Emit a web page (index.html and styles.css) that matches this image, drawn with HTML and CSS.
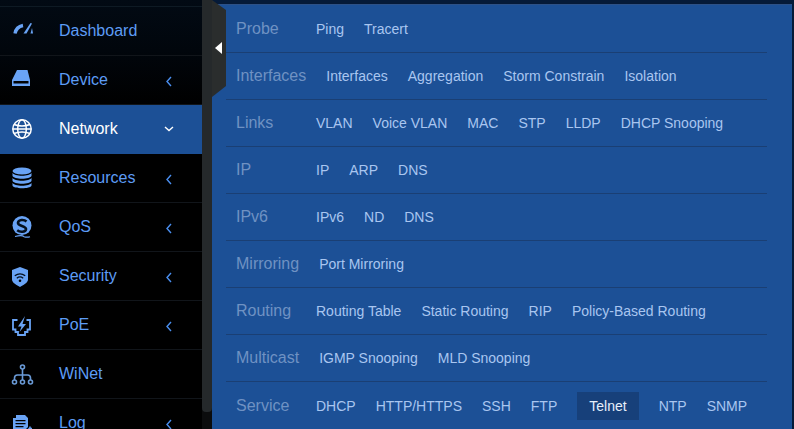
FILE: index.html
```html
<!DOCTYPE html>
<html lang="en">
<head>
<meta charset="utf-8">
<title>Network</title>
<link rel="stylesheet" href="styles.css">
</head>
<body>
<div class="app">
  <nav class="sidebar">
    <ul class="nav">
      <li class="nav-item">
        <svg class="nav-icon" viewBox="0 0 24 24"><path class="stroke" stroke-width="3.400" d="M5 14.500A10 10 0 0 1 13 6.500"/><path class="fill" d="M13.500 14.500L20.500 4l1.500.5-5.500 10z"/><path class="fill" d="M22 9l1 5.500h-2.500z"/></svg>
        <span class="nav-label">Dashboard</span>
      </li>
      <li class="nav-item">
        <svg class="nav-icon" viewBox="0 0 24 24"><path class="fill" fill-rule="evenodd" d="M7 2h10.500l2.500 10v6H2v-6zM3.500 13v2.500h15V13z"/></svg>
        <span class="nav-label">Device</span>
        <svg class="chev" viewBox="0 0 8 12"><path d="M6 2L2 6.500 6 11"/></svg>
      </li>
      <li class="nav-item active">
        <svg class="nav-icon" viewBox="0 0 24 24"><g class="white-line"><circle cx="12" cy="12" r="9.200"/><ellipse cx="12" cy="12" rx="4.300" ry="9.200"/><path d="M4 7.500q8 3 16 0M4 16.500q8-3 16 0M2.800 12h18.400"/></g></svg>
        <span class="nav-label">Network</span>
        <svg class="chev chev-down" viewBox="0 0 10 6"><path d="M1 1l4 3.500L9 1"/></svg>
      </li>
      <li class="nav-item">
        <svg class="nav-icon" viewBox="0 0 24 24"><ellipse class="fill" cx="12" cy="5" rx="9.500" ry="3.500"/><path class="fill" d="M2.500 6.800c1.500 4 17.500 4 19 0v3c-1 4-18 4-19 0zM2.500 11.800c1.500 4 17.500 4 19 0v3c-1 4-18 4-19 0zM2.500 16.800c1.500 4 17.500 4 19 0v2.700c-1 3.700-18 3.700-19 0z"/></svg>
        <span class="nav-label">Resources</span>
        <svg class="chev" viewBox="0 0 8 12"><path d="M6 2L2 6.500 6 11"/></svg>
      </li>
      <li class="nav-item">
        <svg class="nav-icon" viewBox="0 0 24 24"><circle class="fill" cx="12" cy="10.500" r="9.500"/><path class="cut" stroke-width="2.600" d="M16.500 6.500C14 4.200 8.500 4.500 8 7.800c-.4 3.400 8.500 3 8 6.500-.5 3-6 3.200-8.800 1"/><path class="stroke" stroke-width="1.200" d="M5 21.500q7-2 9 .2 3 1 6 0"/></svg>
        <span class="nav-label">QoS</span>
        <svg class="chev" viewBox="0 0 8 12"><path d="M6 2L2 6.500 6 11"/></svg>
      </li>
      <li class="nav-item">
        <svg class="nav-icon" viewBox="0 0 24 24"><path class="fill" d="M10 3l8 3v9.500c0 3.500-5 5.500-8 7.500-3-2-8-4-8-7.500V6z"/><path class="cut" stroke-width="1.300" d="M4.800 11.800q5.200-4 10.400 0M6.800 14.200q3.200-2.500 6.400 0"/><circle class="dot" cx="10" cy="16.800" r="1.300"/></svg>
        <span class="nav-label">Security</span>
        <svg class="chev" viewBox="0 0 8 12"><path d="M6 2L2 6.500 6 11"/></svg>
      </li>
      <li class="nav-item">
        <svg class="nav-icon" viewBox="0 0 24 24"><path class="stroke" stroke-width="1.800" d="M7.500 7H3v9.500h2.500V19H8v3h7v-3h2.500v-2.500H20V7h-3.500"/><path class="fill" d="M15 3L8 13.500h3.500L9.500 19l6.500-8h-3.500z"/></svg>
        <span class="nav-label">PoE</span>
        <svg class="chev" viewBox="0 0 8 12"><path d="M6 2L2 6.500 6 11"/></svg>
      </li>
      <li class="nav-item">
        <svg class="nav-icon" viewBox="0 0 24 24"><g class="dim-line"><circle cx="12.500" cy="5" r="2"/><circle cx="4.500" cy="20" r="2"/><circle cx="12.500" cy="20" r="2"/><circle cx="20.500" cy="20" r="2"/><path d="M12.500 7v11M4.500 18v-2c0-2 1-3 3-3h10c2 0 3 1 3 3v2"/></g></svg>
        <span class="nav-label">WiNet</span>
      </li>
      <li class="nav-item">
        <svg class="nav-icon" viewBox="0 0 24 24"><path class="fill" fill-rule="evenodd" d="M6 4h9l3 3v9l-4 4v2H3V7h3zM5.500 9v1.300h10V9zM5.500 12v1.300h10V12zM5.500 15v1.300h8V15zM5.500 18v1.300h6V18z"/><path class="stroke" stroke-width="1.800" d="M15 22l5-5"/><path class="stroke" stroke-width="1.500" d="M20 15.500v2h2"/></svg>
        <span class="nav-label">Log</span>
        <svg class="chev" viewBox="0 0 8 12"><path d="M6 2L2 6.500 6 11"/></svg>
      </li>
    </ul>
  </nav>
  <div class="scroll-track"><div class="scroll-thumb"></div></div>
  <main class="main">
    <div class="top-strip"></div>
    <section class="panel">
      <div class="row"><span class="row-label">Probe</span><a class="link">Ping</a><a class="link">Tracert</a></div>
      <div class="row"><span class="row-label">Interfaces</span><a class="link">Interfaces</a><a class="link">Aggregation</a><a class="link">Storm Constrain</a><a class="link">Isolation</a></div>
      <div class="row"><span class="row-label">Links</span><a class="link">VLAN</a><a class="link">Voice VLAN</a><a class="link">MAC</a><a class="link">STP</a><a class="link">LLDP</a><a class="link">DHCP Snooping</a></div>
      <div class="row"><span class="row-label">IP</span><a class="link">IP</a><a class="link">ARP</a><a class="link">DNS</a></div>
      <div class="row"><span class="row-label">IPv6</span><a class="link">IPv6</a><a class="link">ND</a><a class="link">DNS</a></div>
      <div class="row"><span class="row-label">Mirroring</span><a class="link">Port Mirroring</a></div>
      <div class="row"><span class="row-label">Routing</span><a class="link">Routing Table</a><a class="link">Static Routing</a><a class="link">RIP</a><a class="link">Policy-Based Routing</a></div>
      <div class="row"><span class="row-label">Multicast</span><a class="link">IGMP Snooping</a><a class="link">MLD Snooping</a></div>
      <div class="row"><span class="row-label">Service</span><a class="link">DHCP</a><a class="link">HTTP/HTTPS</a><a class="link">SSH</a><a class="link">FTP</a><a class="link link-active">Telnet</a><a class="link">NTP</a><a class="link">SNMP</a></div>
    </section>
    <div class="handle"><span class="handle-arrow"></span></div>
  </main>
</div>
</body>
</html>
```

FILE: styles.css
```css
* {
  box-sizing: border-box;
}

html,
body {
  margin: 0;
  height: 100%;
  overflow: hidden;
  background: #000;
  font-family: "Liberation Sans", Arial, sans-serif;
}

.app {
  display: flex;
  height: 429px;
  width: 794px;
  overflow: hidden;
}

.sidebar {
  flex: 0 0 202px;
  padding-top: 6px;
  background: linear-gradient(180deg, #020a14 0, #01060c 50px, #000 105px);
}

.nav {
  list-style: none;
  margin: 0;
  padding: 0;
  border-top: 1px solid #0e1a24;
}

.nav-item {
  display: flex;
  align-items: center;
  flex: none;
  height: 49px;
  padding: 0 29px 0 10px;
  border-bottom: 1px solid #11151a;
  color: #5d9cf5;
  font-size: 16px;
  line-height: 20px;
}

.nav-item.active {
  background: #1c5096;
  border-bottom-color: #1c5096;
  color: #fff;
  font-weight: 400;
}

.nav-icon {
  flex: none;
  width: 24px;
  height: 24px;
  margin-right: 25px;
}

.fill {
  fill: #69a3f5;
}

.dot {
  fill: #000;
}

.stroke {
  fill: none;
  stroke: #69a3f5;
}

.cut {
  fill: none;
  stroke: #04101f;
}

.white-line {
  fill: none;
  stroke: #fff;
  stroke-width: 1.500;
}

.dim-line {
  fill: none;
  stroke: #6a9ad6;
  stroke-width: 1.600;
}

.nav-label {
  flex: 1;
}

.chev {
  flex: none;
  width: 8px;
  height: 12px;
  margin-top: 2px;
  fill: none;
  stroke: #4a8ff0;
  stroke-width: 1.400;
}

.chev-down {
  width: 10px;
  height: 6px;
  margin-top: 0;
  margin-right: -1px;
  stroke: #fff;
}

.scroll-track {
  flex: 0 0 10px;
  background: #0b0c0d;
}

.scroll-thumb {
  height: 412px;
  background: #25292b;
  border-radius: 0 0 4px 4px;
}

.main {
  position: relative;
  display: flex;
  flex-direction: column;
  flex: 1;
  min-width: 0;
  background: #051a38;
}

.top-strip {
  flex: 0 0 4px;
}

.panel {
  flex: 1;
  width: 580px;
  padding: 2px 25px 0 14px;
  overflow: hidden;
  background: #1c5096;
  box-shadow: inset 0 1px 0 #2d5187;
}

.row {
  display: flex;
  align-items: center;
  gap: 20px;
  height: 47px;
  padding-left: 10px;
  border-bottom: 1px solid #1a3f74;
  font-size: 14px;
  line-height: 28px;
}

.row:last-child {
  border-bottom: 0;
}

.row-label {
  min-width: 60px;
  color: #6f92c3;
  font-size: 16px;
}

.link {
  color: #a9c6f0;
  white-space: nowrap;
}

.link-active {
  padding: 0 12px;
  background: #17407a;
  color: #e6effb;
}

.handle {
  position: absolute;
  top: 0;
  left: 0;
  width: 14px;
  height: 97px;
  background: #2a2d2d;
  clip-path: polygon(0 0, 100% 10px, 100% 86px, 0 100%);
}

.handle-arrow {
  position: absolute;
  top: 42px;
  left: 3px;
  border-style: solid;
  border-width: 6.500px 7px 6.500px 0;
  border-color: transparent #fff transparent transparent;
}
```
